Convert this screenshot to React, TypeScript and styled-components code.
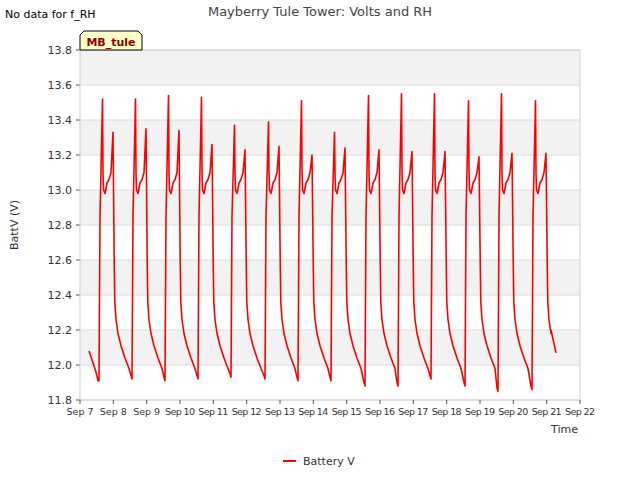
import React from 'react'
import styled, { createGlobalStyle } from 'styled-components'

const Global = createGlobalStyle`
  body { margin: 0; background: #fff; font-family: 'DejaVu Sans', sans-serif; }
`

const Page = styled.div`
  width: 640px;
  height: 480px;
  overflow: hidden;
`

const ChartSvg = styled.svg`
  display: block;
  font-family: 'DejaVu Sans', sans-serif;
`

const X0 = 80
const X1 = 580
const Y0 = 50
const Y1 = 400
const vy = (v: number) => Y0 + (13.8 - v) * 175
const dayX = (d: number) => X0 + (d * (X1 - X0)) / 15

const rises = [100, 133, 166, 199, 232, 266, 299, 332, 366, 399, 432, 466, 499, 533]
const peaks = [13.52, 13.52, 13.54, 13.53, 13.37, 13.39, 13.51, 13.33, 13.54, 13.55, 13.55, 13.51, 13.55, 13.51]
const highs = [13.33, 13.35, 13.34, 13.26, 13.23, 13.25, 13.2, 13.24, 13.23, 13.22, 13.22, 13.19, 13.21, 13.21]
const mins = [11.91, 11.92, 11.91, 11.92, 11.93, 11.92, 11.91, 11.91, 11.88, 11.88, 11.92, 11.88, 11.85, 11.86]

const buildPoints = () => {
  const pts: [number, number][] = [[89, 12.08], [92, 12.03], [96, 11.96], [98, 11.91]]
  rises.forEach((xr, i) => {
    pts.push([xr - 1, mins[i]], [xr, 12.85], [xr + 2.5, peaks[i]], [xr + 3, 13.1], [xr + 3.5, 13.0], [xr + 5, 12.98],
      [xr + 7, 13.04], [xr + 9, 13.06], [xr + 11, 13.1], [xr + 13, highs[i]], [xr + 14.2, 12.6], [xr + 14.8, 12.36],
      [xr + 16, 12.26], [xr + 18, 12.18])
    if (i < rises.length - 1) {
      pts.push([xr + 21, 12.11], [xr + 25, 12.04], [xr + 29, 11.98], [rises[i + 1] - 2, mins[i + 1] + 0.02])
    } else {
      pts.push([551, 12.2], [556, 12.07])
    }
  })
  return pts.map(([x, v]) => `${x},${vy(v).toFixed(1)}`).join(' ')
}

const yTicks = [11.8, 12.0, 12.2, 12.4, 12.6, 12.8, 13.0, 13.2, 13.4, 13.6, 13.8]
const xLabels = ['Sep 7', 'Sep 8', 'Sep 9', 'Sep 10', 'Sep 11', 'Sep 12', 'Sep 13', 'Sep 14', 'Sep 15', 'Sep 16', 'Sep 17', 'Sep 18', 'Sep 19', 'Sep 20', 'Sep 21', 'Sep 22']

const Chart = () => (
  <ChartSvg width={640} height={480}>
    {[0, 2, 4, 6, 8].map((k) => (
      <rect key={k} x={X0} y={vy(13.8 - k * 0.2)} width={X1 - X0} height={35} fill="#f2f2f2" />
    ))}
    {yTicks.map((t) => (
      <g key={t}>
        <line x1={X0} x2={X1} y1={vy(t)} y2={vy(t)} stroke="#dcdcdc" strokeWidth={1} />
        <line x1={X0 - 4} x2={X0} y1={vy(t)} y2={vy(t)} stroke="#555" />
        <text x={X0 - 8} y={vy(t) + 4} fontSize={11} fill="#333" textAnchor="end">{t.toFixed(1)}</text>
      </g>
    ))}
    <rect x={X0} y={Y0} width={X1 - X0} height={Y1 - Y0} fill="none" stroke="#d0d0d0" />
    {xLabels.map((l, i) => (
      <g key={l}>
        <line x1={dayX(i)} x2={dayX(i)} y1={Y1} y2={Y1 + 4} stroke="#555" />
        <text x={dayX(i)} y={Y1 + 15} fontSize={9.5} fill="#333" textAnchor="middle" textLength={l.length > 5 ? 30 : undefined}>{l}</text>
      </g>
    ))}
    <polyline points={buildPoints()} fill="none" stroke="#ff0000" strokeWidth={1.6} strokeLinejoin="round" />
    <text x={320} y={16} fontSize={13} fill="#444" textAnchor="middle">Mayberry Tule Tower: Volts and RH</text>
    <text x={5} y={18} fontSize={11} fill="#000">No data for f_RH</text>
    <text x={578} y={433} fontSize={11} fill="#333" textAnchor="end">Time</text>
    <text x={18} y={225} fontSize={11} fill="#333" textAnchor="middle" transform="rotate(-90 18 225)">BattV (V)</text>
    <polygon points="80,50 80,35 84,31 138,31 142,35 142,50" fill="#ffffc8" stroke="#000" />
    <text x={111} y={46} fontSize={11} fontWeight="bold" fill="#8b0000" textAnchor="middle">MB_tule</text>
    <line x1={283} x2={296} y1={461} y2={461} stroke="#ff0000" strokeWidth={2} />
    <text x={303} y={465} fontSize={11} fill="#333">Battery V</text>
  </ChartSvg>
)

export default function App() {
  return (
    <Page>
      <Global />
      <Chart />
    </Page>
  )
}
